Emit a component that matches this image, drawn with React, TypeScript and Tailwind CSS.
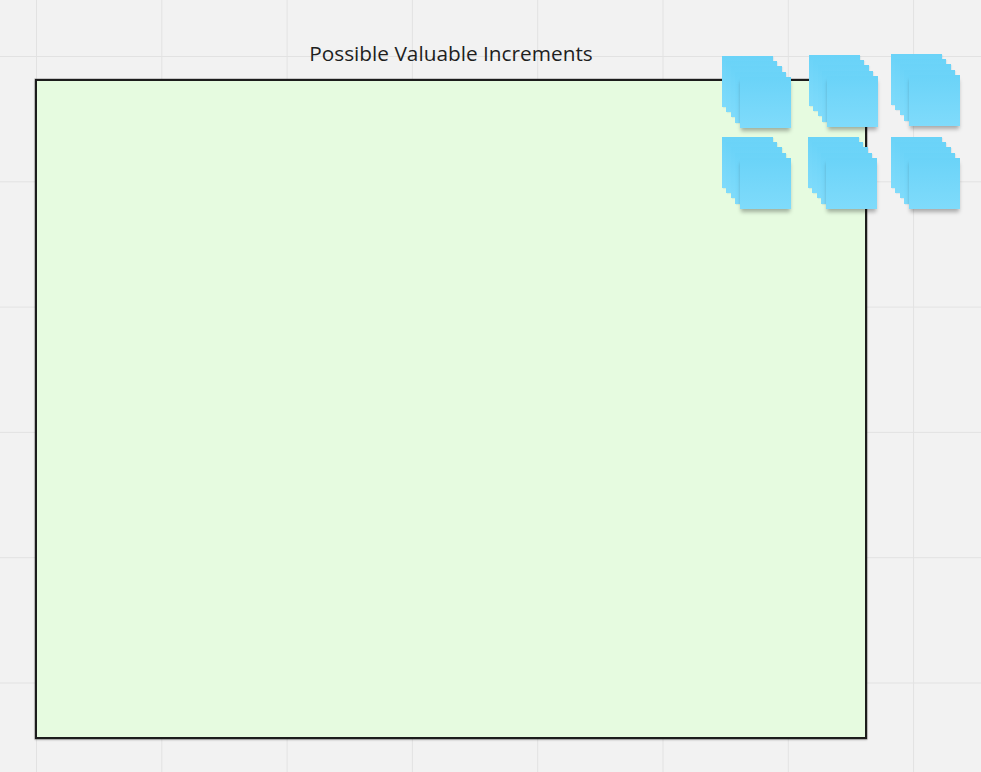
const stacks = [
  { x: 722, y: 56 },
  { x: 809, y: 55 },
  { x: 891, y: 54 },
  { x: 722, y: 137 },
  { x: 808, y: 137 },
  { x: 891, y: 137 },
];

const layers = [0, 1, 2, 3, 4];

function StickyStack({ x, y }: { x: number; y: number }) {
  return (
    <div className="absolute" style={{ left: x, top: y }}>
      {layers.map((i) => (
        <div
          key={i}
          className={`absolute w-[51px] h-[51px] bg-gradient-to-b from-[#6ad3f8] to-[#7fdbfb] ${
            i === 4
              ? "shadow-[0_4px_4px_-1px_rgba(0,0,0,0.3)]"
              : "shadow-[1px_1px_1px_rgba(0,100,140,0.08)]"
          }`}
          style={{ left: i * 4.4, top: i * 5.2 }}
        />
      ))}
    </div>
  );
}

export default function App() {
  return (
    <div className="relative w-[981px] h-[772px] overflow-hidden bg-[#f2f2f2] bg-[linear-gradient(to_right,#e2e2e2_1px,transparent_1px),linear-gradient(to_bottom,#e2e2e2_1px,transparent_1px)] bg-[size:125.3px_125.3px] bg-[position:36px_56px] font-['Open_Sans',sans-serif]">
      {/* Frame title */}
      <div className="absolute left-[35px] top-[38px] w-[832px] text-center text-[20.8px] leading-[30px] text-[#1f1f1f]">
        Possible Valuable Increments
      </div>

      {/* Frame */}
      <div className="absolute left-[35px] top-[79px] w-[832px] h-[660px] bg-[#e6fbe0] border-2 border-[#1c1c1c] shadow-[0_0_0_0.5px_rgba(0,0,0,0.35),0_1px_2px_rgba(0,0,0,0.25)]" />

      {/* Sticky note stacks */}
      {stacks.map((s, i) => (
        <StickyStack key={i} x={s.x} y={s.y} />
      ))}
    </div>
  );
}
